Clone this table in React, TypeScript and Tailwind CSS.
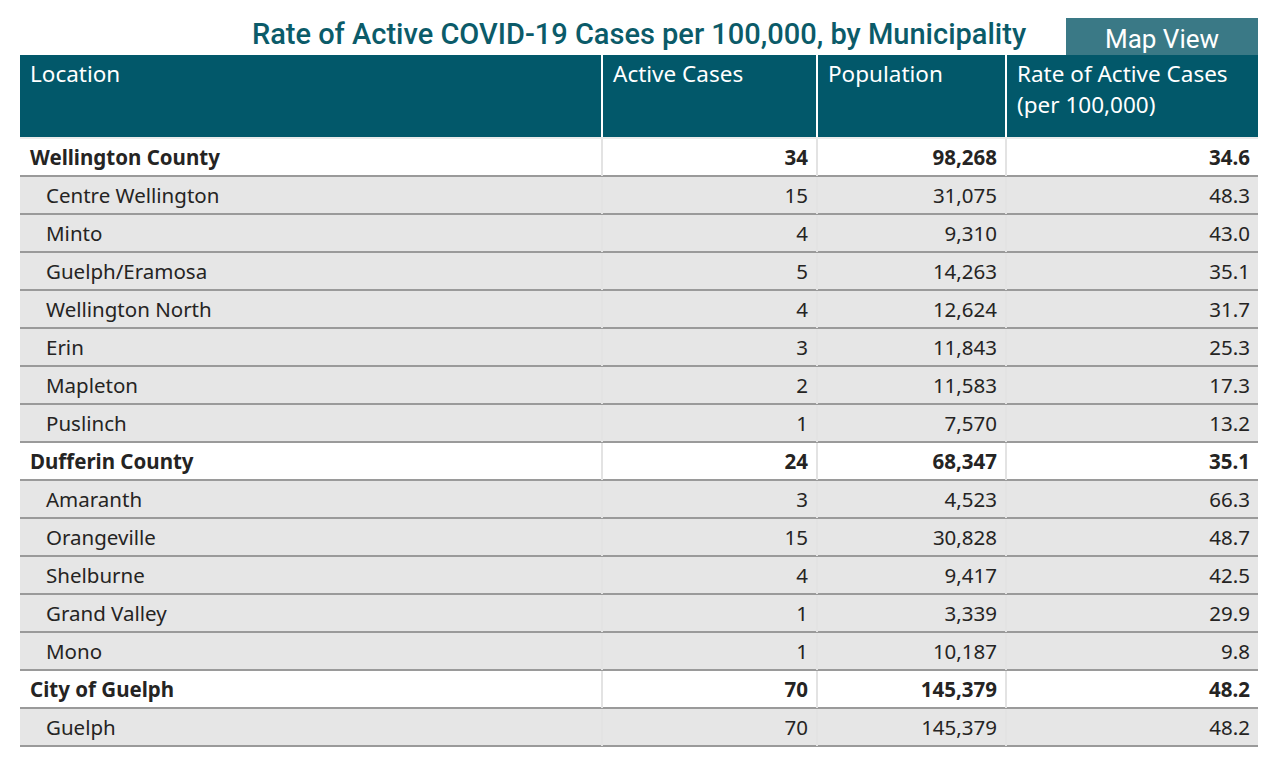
import React from "react";

interface Row {
  name: string;
  cases: string;
  pop: string;
  rate: string;
  group?: boolean;
}

const rows: Row[] = [
  { name: "Wellington County", cases: "34", pop: "98,268", rate: "34.6", group: true },
  { name: "Centre Wellington", cases: "15", pop: "31,075", rate: "48.3" },
  { name: "Minto", cases: "4", pop: "9,310", rate: "43.0" },
  { name: "Guelph/Eramosa", cases: "5", pop: "14,263", rate: "35.1" },
  { name: "Wellington North", cases: "4", pop: "12,624", rate: "31.7" },
  { name: "Erin", cases: "3", pop: "11,843", rate: "25.3" },
  { name: "Mapleton", cases: "2", pop: "11,583", rate: "17.3" },
  { name: "Puslinch", cases: "1", pop: "7,570", rate: "13.2" },
  { name: "Dufferin County", cases: "24", pop: "68,347", rate: "35.1", group: true },
  { name: "Amaranth", cases: "3", pop: "4,523", rate: "66.3" },
  { name: "Orangeville", cases: "15", pop: "30,828", rate: "48.7" },
  { name: "Shelburne", cases: "4", pop: "9,417", rate: "42.5" },
  { name: "Grand Valley", cases: "1", pop: "3,339", rate: "29.9" },
  { name: "Mono", cases: "1", pop: "10,187", rate: "9.8" },
  { name: "City of Guelph", cases: "70", pop: "145,379", rate: "48.2", group: true },
  { name: "Guelph", cases: "70", pop: "145,379", rate: "48.2" },
];

const cols = "grid grid-cols-[583px_215px_189px_251px]";

export default function App() {
  return (
    <div className="h-[770px] w-[1278px] bg-white font-['Noto_Sans','Open_Sans',sans-serif] text-[#252423]">
      {/* Title + map button */}
      <div className="relative flex h-[55px] items-end justify-center">
        <h1 className="pb-[6px] font-['Roboto',sans-serif] text-[29px] font-medium leading-none text-[#0b5b69]">
          Rate of Active COVID-19 Cases per 100,000, by Municipality
        </h1>
        <button className="absolute right-[20px] bottom-0 flex h-[37px] w-[192px] items-center justify-center bg-[#3a7986] pt-[5px] font-['Roboto',sans-serif] text-[26px] leading-none text-white">
          Map View
        </button>
      </div>

      <div className="ml-[20px] w-[1238px]">
        {/* Header */}
        <div className={`${cols} h-[82px] bg-[#02586a] text-[22.5px] leading-[31px] text-white`}>
          <div className="border-r-2 border-white px-[10px] pt-[3px]">Location</div>
          <div className="border-r-2 border-white px-[10px] pt-[3px]">Active Cases</div>
          <div className="border-r-2 border-white px-[10px] pt-[3px]">Population</div>
          <div className="px-[10px] pt-[3px]">
            Rate of Active Cases
            <br />
            (per 100,000)
          </div>
        </div>
        <div className="h-[2px] bg-[#ebebeb]" />

        {/* Body */}
        {rows.map((r) => (
          <div
            key={r.name + r.group}
            className={`${cols} h-[38px] border-b-2 border-[#9a9a9a] text-[20.5px] leading-[37px] ${
              r.group ? "bg-white font-bold" : "bg-[#e6e6e6]"
            }`}
          >
            <div className={`border-r-2 border-[#e3e3e3] ${r.group ? "pl-[10px]" : "pl-[26px]"}`}>
              {r.name}
            </div>
            <div className="border-r-2 border-[#e3e3e3] pr-[8px] text-right">{r.cases}</div>
            <div className="border-r-2 border-[#e3e3e3] pr-[8px] text-right">{r.pop}</div>
            <div className="pr-[8px] text-right">{r.rate}</div>
          </div>
        ))}
      </div>
    </div>
  );
}
